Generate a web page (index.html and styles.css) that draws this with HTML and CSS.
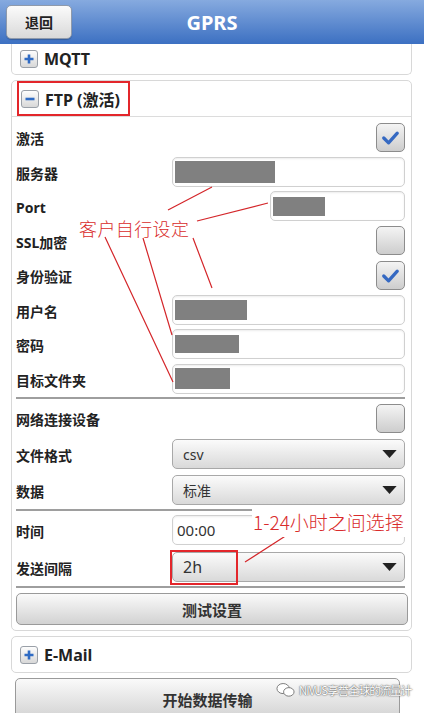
FILE: index.html
```html
<!DOCTYPE html>
<html lang="zh">
<head>
<meta charset="UTF-8" />
<meta name="viewport" content="width=device-width, initial-scale=1" />
<title>GPRS</title>
<link rel="stylesheet" href="styles.css">
</head>
<body>

<header class="topbar">
  <div class="topbar-left"><button class="back">退回</button></div>
  <h1>GPRS</h1>
  <div></div>
</header>

<main class="content">
  <section class="panel panel-cut">
    <div class="panel-head">
      <span class="toggle"><svg viewBox="0 0 16 16"><path d="M8 3.5v9M3.5 8h9" /></svg></span>
      <span class="panel-title">MQTT</span>
    </div>
  </section>

  <section class="panel">
    <div class="panel-head panel-head-open">
      <span class="mark">
        <span class="toggle"><svg viewBox="0 0 16 16"><path d="M3.5 8h9" /></svg></span>
        <span class="panel-title">FTP (激活)</span>
      </span>
    </div>
    <div class="panel-body">
      <div class="group group-tight">
        <div class="row">
          <label>激活</label>
          <span class="check"><svg viewBox="0 0 28 28"><path d="M7 14.5l5 5 9-10" /></svg></span>
        </div>
        <div class="row">
          <label>服务器</label>
          <div class="field"><span class="mask" style="width:100px;height:22px"></span></div>
        </div>
        <div class="row">
          <label>Port</label>
          <div class="field field-short"><span class="mask" style="width:52px;height:19px"></span></div>
        </div>
        <div class="row">
          <label>SSL加密</label>
          <span class="check"></span>
        </div>
        <div class="row">
          <label>身份验证</label>
          <span class="check"><svg viewBox="0 0 28 28"><path d="M7 14.5l5 5 9-10" /></svg></span>
        </div>
        <div class="row">
          <label>用户名</label>
          <div class="field"><span class="mask" style="width:72px;height:20px"></span></div>
        </div>
        <div class="row">
          <label>密码</label>
          <div class="field"><span class="mask" style="width:64px;height:18px"></span></div>
        </div>
        <div class="row">
          <label>目标文件夹</label>
          <div class="field"><span class="mask" style="width:55px;height:21px"></span></div>
        </div>
      </div>

      <hr class="sep">

      <div class="group">
        <div class="row">
          <label>网络连接设备</label>
          <span class="check"></span>
        </div>
        <div class="row">
          <label>文件格式</label>
          <div class="select"><span>csv</span><svg class="caret" viewBox="0 0 16 9"><path d="M0 0h16L8 9z" /></svg></div>
        </div>
        <div class="row">
          <label>数据</label>
          <div class="select"><span>标准</span><svg class="caret" viewBox="0 0 16 9"><path d="M0 0h16L8 9z" /></svg></div>
        </div>
      </div>

      <hr class="sep">

      <div class="group group-loose">
        <div class="row">
          <label>时间</label>
          <div class="field"><span class="value">00:00</span></div>
        </div>
        <div class="row">
          <label>发送间隔</label>
          <div class="select select-big">
            <span>2h</span><svg class="caret" viewBox="0 0 16 9"><path d="M0 0h16L8 9z" /></svg>
            <span class="redbox"></span>
          </div>
        </div>
      </div>

      <hr class="sep">

      <button class="wide">测试设置</button>
    </div>
  </section>

  <section class="panel">
    <div class="panel-head">
      <span class="toggle"><svg viewBox="0 0 16 16"><path d="M8 3.5v9M3.5 8h9" /></svg></span>
      <span class="panel-title">E-Mail</span>
    </div>
  </section>

  <button class="wide start">开始数据传输</button>
</main>

<!-- annotations drawn on top of the screenshot -->
<svg class="notes" viewBox="0 0 424 713">
  <path d="M168 210L212 187M197 221L268 203M105 237L173 382M143 238L172 335M193 238L212 288M287 535L245 562" />
</svg>
<div class="note note-a">客户自行设定</div>
<div class="note note-b">1-24小时之间选择</div>

<div class="wm">
  <svg viewBox="0 0 20 16"><ellipse cx="7.5" cy="6.5" rx="6.5" ry="5.3" /><ellipse cx="13.5" cy="10" rx="5.5" ry="4.5" /></svg>
  <span>NIVUS享誉全球的流量计</span>
</div>

</body>
</html>
```

FILE: styles.css
```css
body {
  margin: 0; background: #fff; color: #222;
  font-family: "Noto Sans", "Noto Sans CJK SC", sans-serif;
  width: 424px; height: 713px; overflow: hidden; position: relative;
}
.topbar {
  height: 44px; display: grid; grid-template-columns: 1fr auto 1fr; align-items: center;
  background: linear-gradient(#86aadf, #3c70c2);
}
.topbar h1 {
  margin: 0; color: #fff; font-size: 20px; font-weight: bold;
}
.topbar-left { padding-left: 6px; }
.back {
  width: 66px; height: 34px; border: 1px solid #8f9aab; border-radius: 5px;
  background: linear-gradient(#fbfbfb, #d9d9d9);
  font: bold 14px "Noto Sans CJK SC", sans-serif; color: #222;
  box-shadow: 0 1px 1px rgba(0,0,0,.2);
}
.content { padding: 0 12px 0 11px; }
.panel {
  border: 1px solid #d8d8d8; border-radius: 5px; background: #fff; margin-bottom: 5px;
}
.panel-cut { border-top: 0; border-radius: 0 0 5px 5px; }
.panel-cut .panel-head { height: 30px; }
.panel-head {
  height: 35px; display: flex; align-items: center; gap: 6px; padding-left: 8px;
}
.panel-head-open { border-bottom: 1px solid #dcdcdc; padding-left: 5px; }
.mark {
  height: 31px; display: flex; align-items: center; gap: 6px;
  border: 2px solid #e3262b; padding: 0 8px 0 2px;
}
.toggle {
  width: 16px; height: 16px; border: 1px solid #9aa0a8; border-radius: 3px;
  background: linear-gradient(#fdfdfd, #d8d8d8); display: flex;
}
.toggle svg { width: 16px; height: 16px; }
.toggle path { stroke: #2f6bc4; stroke-width: 2.6; fill: none; }
.panel-title { font-size: 16px; font-weight: bold; color: #222; }

.panel-body { padding: 3px 6px 5px 4px; }
.group .row { height: 36px; }
.group-tight .row { height: 34.5px; }
.group-loose .row { height: 36.5px; }
.row {
  display: grid; grid-template-columns: 156px 1fr; align-items: center;
}
.row label { font-size: 14px; font-weight: bold; padding-top: 2px; }
.check {
  justify-self: end; width: 27px; height: 27px; border: 1px solid #8c8c8c; border-radius: 5px;
  background: linear-gradient(#f4f4f4, #cdcdcd);
}
.check svg { width: 27px; height: 27px; display: block; }
.check path { stroke: #3569c2; stroke-width: 3.4; fill: none; stroke-linecap: round; stroke-linejoin: round; }
.field {
  height: 28px; border: 1px solid #d0d0d0; border-radius: 5px; background: #fff;
  box-shadow: inset 0 1px 2px rgba(0,0,0,.08);
  display: flex; align-items: center; padding-left: 2px;
}
.field-short { margin-left: 98px; }
.mask { background: #808080; display: block; }
.value { font-size: 15px; color: #333; padding-left: 2px; }
.select {
  position: relative; height: 28px; border: 1px solid #a8a8a8; border-radius: 5px;
  background: linear-gradient(#fbfbfb, #d9d9d9);
  display: flex; align-items: center; justify-content: space-between; padding: 0 7px 0 10px;
  font-size: 14px; color: #333;
}
.select-big { font-size: 16px; }
.caret { width: 15px; height: 8px; }
.caret path { fill: #222; }
.redbox {
  position: absolute; left: -3px; top: -3px; width: 64px; height: 31px;
  border: 2px solid #e3262b;
}
.sep { border: 0; border-top: 2px solid #9e9e9e; margin: 1px 0; }
.wide {
  display: block; width: calc(100% + 3px); height: 32px; margin-top: 5px;
  border: 1px solid #9a9a9a; border-radius: 5px;
  background: linear-gradient(#fafafa, #d2d2d2);
  font: bold 15px "Noto Sans CJK SC", sans-serif; color: #333;
}
.start { width: 385px; height: 42px; margin: 0 0 0 4px; }

.notes { position: absolute; left: 0; top: 0; width: 424px; height: 713px; pointer-events: none; }
.notes path { stroke: #d4262a; stroke-width: 1.2; fill: none; }
.note {
  position: absolute; color: #d92b2b; font-family: "Noto Sans CJK SC", sans-serif;
  font-weight: 300; line-height: 28px;
}
.note-a { left: 79px; top: 214px; font-size: 18px; letter-spacing: .4px; }
.note-b { left: 252px; top: 508px; width: 158px; height: 29px; font-size: 19px; background: #fff; padding-left: 1px; }

.wm {
  position: absolute; left: 276px; top: 682px; display: flex; align-items: center; gap: 4px;
  color: #fff; font: 11.5px "Noto Sans CJK SC", sans-serif; letter-spacing: -1px;
  white-space: nowrap;
  text-shadow: 0 0 2px #555, 0 0 1px #555;
}
.wm svg { width: 19px; height: 16px; }
.wm ellipse { fill: #fff; stroke: #777; stroke-width: 1; }
```
